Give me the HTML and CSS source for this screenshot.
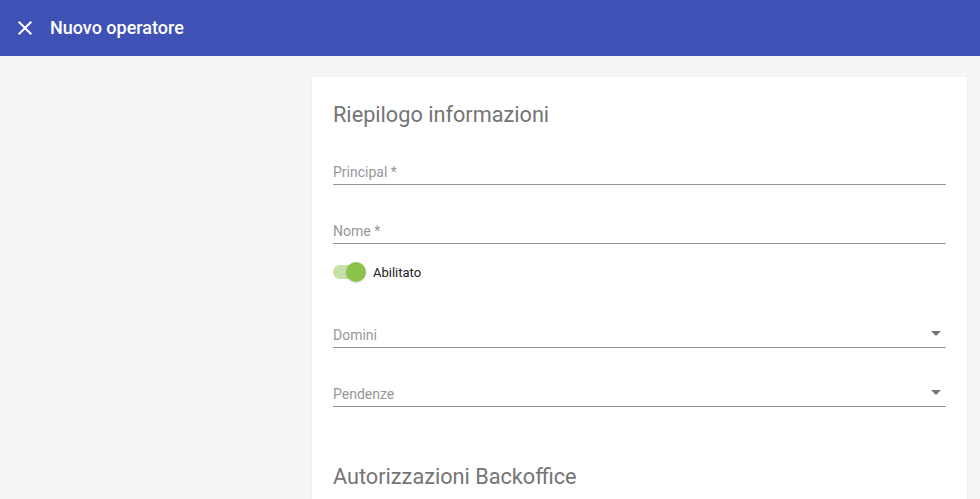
FILE: index.html
```html
<!DOCTYPE html>
<html lang="it">
<head>
<meta charset="utf-8">
<title>Nuovo operatore</title>
<link rel="stylesheet" href="styles.css">
</head>
<body>
<header class="toolbar">
  <span class="close-icon">
    <svg viewBox="0 0 24 24" width="24" height="24"><path d="M19 6.41L17.59 5 12 10.59 6.41 5 5 6.41 10.59 12 5 17.59 6.41 19 12 13.41 17.59 19 19 17.59 13.41 12z" fill="#fff"/></svg>
  </span>
  <span class="toolbar-title">Nuovo operatore</span>
</header>
<main class="page">
  <div class="spacer"></div>
  <section class="card">
    <h2 class="section-title first">Riepilogo informazioni</h2>
    <div class="field"><span class="label">Principal *</span></div>
    <div class="field"><span class="label">Nome *</span></div>
    <div class="toggle-row">
      <span class="toggle"><span class="track"></span><span class="thumb"></span></span>
      <span class="toggle-label">Abilitato</span>
    </div>
    <div class="field select"><span class="label">Domini</span><span class="arrow"></span></div>
    <div class="field select"><span class="label">Pendenze</span><span class="arrow"></span></div>
    <h2 class="section-title second">Autorizzazioni Backoffice</h2>
  </section>
</main>
</body>
</html>
```
FILE: styles.css
```css
html, body {
  margin: 0;
  padding: 0;
  height: 100%;
  overflow: hidden;
}
body {
  background: #f5f5f5;
  font-family: Roboto, "Liberation Sans", Arial, sans-serif;
}
.toolbar {
  height: 56px;
  background: #3f51b5;
  display: flex;
  align-items: center;
  padding-left: 13px;
  box-sizing: border-box;
}
.close-icon {
  width: 24px;
  height: 24px;
  display: flex;
}
.close-icon svg {
  display: block;
}
.toolbar-title {
  margin-left: 13px;
  color: #fff;
  font-size: 18px;
  font-weight: 500;
  margin-top: -2px;
}
.page {
  display: grid;
  grid-template-columns: 312px 1fr;
  padding: 21px 13px 0 0;
}
.card {
  background: #fff;
  padding: 24px 21px 40px 21px;
  box-shadow: 0 1px 2px rgba(0,0,0,0.06);
  min-height: 500px;
}
.section-title {
  margin: 0;
  font-size: 21.7px;
  font-weight: 400;
  line-height: 28px;
  color: #757575;
}
.section-title.first {
  margin-bottom: -3px;
}
.section-title.second {
  margin-top: 56px;
}
.field {
  position: relative;
  padding-top: 36px;
  padding-bottom: 2px;
  border-bottom: 1px solid #949494;
}
.label {
  display: block;
  font-size: 14px;
  line-height: 20px;
  color: #979797;
}
.arrow {
  position: absolute;
  right: 5px;
  top: 42px;
  width: 0;
  height: 0;
  border-left: 5px solid transparent;
  border-right: 5px solid transparent;
  border-top: 5px solid #757575;
}
.toggle-row {
  display: flex;
  align-items: center;
  height: 20px;
  margin-top: 18px;
  margin-bottom: 7px;
}
.toggle {
  position: relative;
  width: 32px;
  height: 20px;
  display: flex;
  align-items: center;
}
.track {
  width: 32px;
  height: 14px;
  border-radius: 7px;
  background: #c5e1a5;
}
.thumb {
  position: absolute;
  left: 13px;
  top: 0;
  width: 20px;
  height: 20px;
  border-radius: 50%;
  background: #8bc34a;
  box-shadow: 0 1px 2px rgba(0,0,0,0.15);
}
.toggle-label {
  margin-left: 8px;
  font-size: 13px;
  color: #212121;
}
```
